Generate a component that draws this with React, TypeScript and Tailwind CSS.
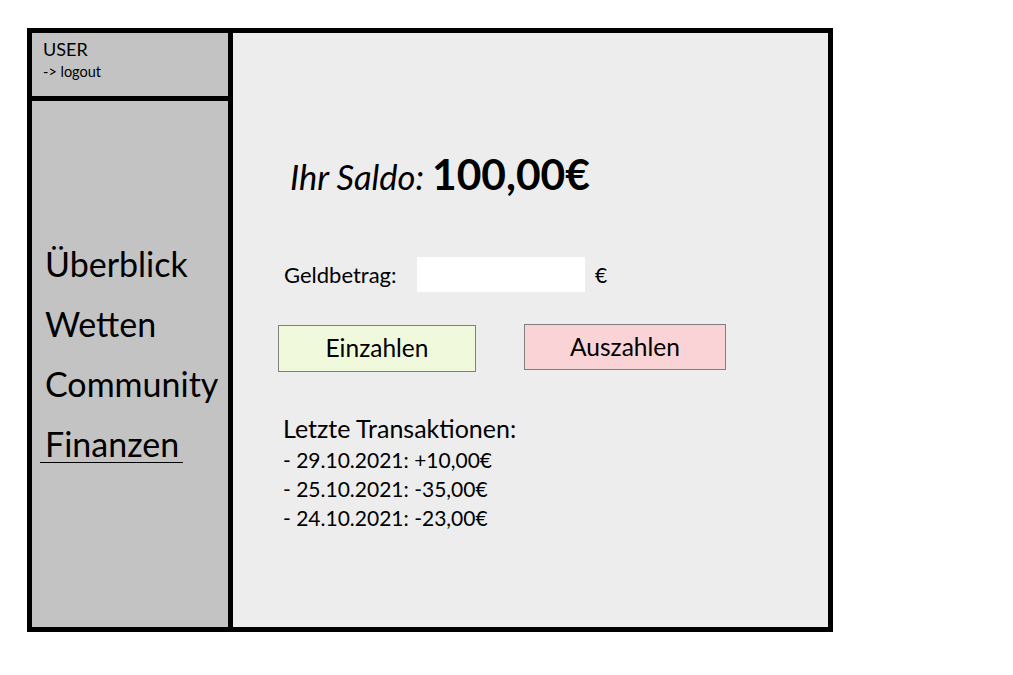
const navItems = ["Überblick", "Wetten", "Community"]

const transactions = [
  { date: "29.10.2021", amount: "+10,00€" },
  { date: "25.10.2021", amount: "-35,00€" },
  { date: "24.10.2021", amount: "-23,00€" },
]

function Sidebar() {
  return (
    <aside className="w-[201px] shrink-0 border-r-[5px] border-black bg-[#c3c3c3] flex flex-col">
      <div className="h-[68px] border-b-[5px] border-black pl-[11px] pt-[6px]">
        <div className="text-[18px] leading-[20px]">USER</div>
        <div className="mt-[4px] text-[14.5px] leading-[18px]">-&gt; logout</div>
      </div>
      <nav className="flex flex-col pl-[13px] pt-[133px] text-[34px]">
        {navItems.map((item) => (
          <div key={item} className="h-[60px] leading-[60px]">{item}</div>
        ))}
        <div className="w-[143px] -ml-[5px] pl-[5px] h-[49px] leading-[60px] border-b border-black">
          Finanzen
        </div>
      </nav>
    </aside>
  )
}

function Finances() {
  return (
    <main className="flex-1 bg-[#ededed] flex flex-col pt-[116px]">
      <div className="flex items-baseline pl-[57px] leading-[50px]">
        <span className="italic text-[34.5px]">Ihr Saldo:</span>
        <span className="ml-[8px] font-bold text-[42.5px]">100,00€</span>
      </div>

      <div className="mt-[55px] h-[35px] flex items-center pl-[51px]">
        <label className="w-[133px] text-[22px]">Geldbetrag:</label>
        <input type="text" className="w-[168px] h-[35px] bg-white outline-none" />
        <span className="ml-[10px] text-[21px]">€</span>
      </div>

      <div className="mt-[32px] flex items-start pl-[45px] gap-[48px] text-[24.5px]">
        <button className="mt-[1px] w-[198px] h-[47px] bg-[#f0f9dc] border border-[#7f7f7f]">
          Einzahlen
        </button>
        <button className="w-[202px] h-[46px] bg-[#f9d3d5] border border-[#7f7f7f]">
          Auszahlen
        </button>
      </div>

      <div className="mt-[42px] pl-[50px]">
        <div className="text-[25px] leading-[29px]">Letzte Transaktionen:</div>
        <ul className="mt-[2px] text-[21px] leading-[29px]">
          {transactions.map((t) => (
            <li key={t.date}>- {t.date}: {t.amount}</li>
          ))}
        </ul>
      </div>
    </main>
  )
}

export default function App() {
  return (
    <div className="w-[1013px] h-[675px] bg-white pt-[28px] pl-[27px] text-black font-['Lato',sans-serif]">
      <div className="w-[806px] h-[604px] border-[5px] border-black flex">
        <Sidebar />
        <Finances />
      </div>
    </div>
  )
}
